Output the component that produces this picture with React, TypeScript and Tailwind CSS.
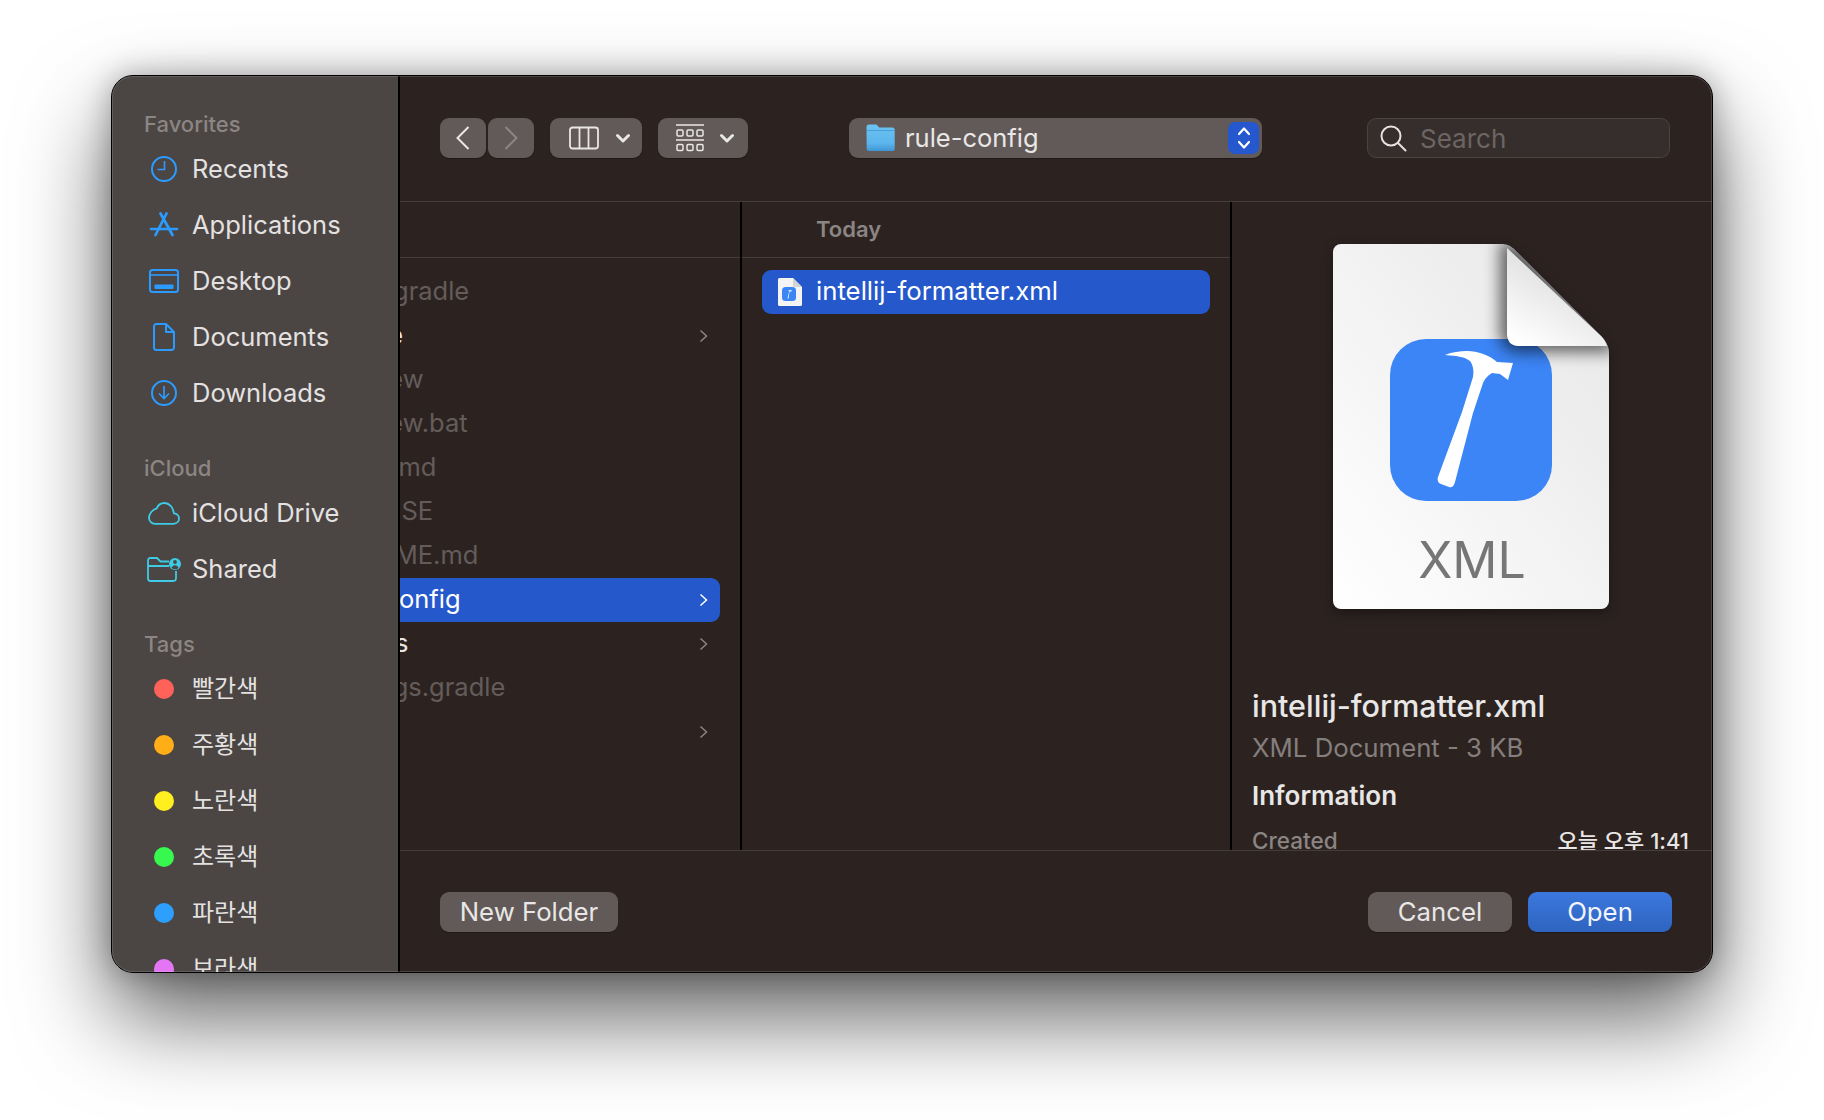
import React from 'react';

const SectionLabel = ({ children, className = '' }: { children: React.ReactNode; className?: string }) => (
  <div className={`h-[34px] flex items-center pl-[32px] text-[22px] font-medium text-[#8b8583] ${className}`}>{children}</div>
);

const SidebarRow = ({ icon, label, korean }: { icon: React.ReactNode; label: string; korean?: boolean }) => (
  <div className="h-[56px] shrink-0 flex items-center">
    <div className="w-[80px] shrink-0 flex items-center justify-center pl-[26px] pr-[2px]">{icon}</div>
    <span className={korean ? 'text-[24px] text-[#e4e2e1]' : 'text-[25.5px] text-[#e4e2e1]'}>{label}</span>
  </div>
);

const blue = '#2c9bff';
const cyan = '#3dcbe6';

const RecentsIcon = () => (
  <svg width="28" height="28" viewBox="0 0 28 28" fill="none" stroke={blue} strokeWidth="2">
    <circle cx="14" cy="14" r="12" />
    <path d="M14.5 6v8.5H7.5" strokeWidth="1.6" />
  </svg>
);
const AppsIcon = () => (
  <svg width="30" height="26" viewBox="0 0 30 26" fill="none" stroke={blue} strokeWidth="2.7" strokeLinecap="round">
    <path d="M11.500 1.500L23.500 23M17.500 1.500L6.500 23" />
    <path d="M2 17h26" />
  </svg>
);
const DesktopIcon = () => (
  <svg width="30" height="24" viewBox="0 0 30 24" fill="none">
    <rect x="1" y="1" width="28" height="22" rx="2.5" stroke={blue} strokeWidth="2" />
    <path d="M1 6h28" stroke={blue} strokeWidth="1.6" />
    <rect x="5.5" y="15.5" width="19" height="4.5" rx="1" fill={blue} />
  </svg>
);
const DocumentIcon = () => (
  <svg width="22" height="28" viewBox="0 0 22 28" fill="none" stroke={blue} strokeWidth="2" strokeLinejoin="round">
    <path d="M3.5 1h9.5l8 8v15.5a2.5 2.5 0 0 1-2.5 2.5h-15A2.5 2.5 0 0 1 1 24.500V3.500A2.500 2.500 0 0 1 3.500 1z" />
    <path d="M13 1v8h8" />
  </svg>
);
const DownloadIcon = () => (
  <svg width="28" height="28" viewBox="0 0 28 28" fill="none" stroke={blue} strokeWidth="2" strokeLinecap="round">
    <circle cx="14" cy="14" r="12" />
    <path d="M14 7.500v12M9.500 15l4.500 4.500 4.500-4.500" strokeWidth="1.700" />
  </svg>
);
const CloudIcon = () => (
  <svg width="32" height="23" viewBox="0 0 32 23" fill="none" stroke={cyan} strokeWidth="1.800">
    <path d="M7 21.800h18.500c3.300 0 5.500-2.400 5.500-5.300 0-2.900-2.200-5-5-5.200C25 5.300 21.300 1 16.500 1c-4 0-6.700 2.500-8 5.700C4.700 7.500 1 11.600 1 15.800c0 3.500 2.700 6 6 6z" />
  </svg>
);
const SharedIcon = () => (
  <svg width="34" height="25" viewBox="0 0 34 25" fill="none">
    <path d="M27 24H3.500A2.500 2.500 0 0 1 1 21.500V3.500A2.500 2.500 0 0 1 3.500 1h6.500l3.500 3.500H22M1 9h21M29 14v7.500a2.500 2.500 0 0 1-2 2.400" stroke={cyan} strokeWidth="1.800" />
    <circle cx="28" cy="7" r="6" fill={cyan} />
    <circle cx="28" cy="5" r="1.900" fill="#4b4544" />
    <path d="M24.500 11c.5-2 2-2.800 3.500-2.800s3 .8 3.500 2.800c-1 .8-2.200 1.200-3.500 1.200s-2.500-.4-3.500-1.200z" fill="#4b4544" />
  </svg>
);

const Dot = ({ color }: { color: string }) => <span className={`block w-[20px] h-[20px] rounded-full ${color}`} />;

const Chevron = ({ color = '#8b8583' }: { color?: string }) => (
  <svg width="9" height="14" viewBox="0 0 9 14" fill="none" stroke={color} strokeWidth="1.500">
    <path d="M1.500 1.500L7.500 7l-6 5.500" />
  </svg>
);

const SmallChevronDown = () => (
  <svg width="16" height="11" viewBox="0 0 16 11" fill="none" stroke="#e9e7e6" strokeWidth="3" strokeLinecap="round" strokeLinejoin="round">
    <path d="M2.500 2.500L8 8l5.500-5.500" />
  </svg>
);

const FolderIcon = () => (
  <svg width="29" height="28" viewBox="0 0 29 28">
    <defs>
      <linearGradient id="folderFill" x1="0" y1="0" x2="0" y2="1">
        <stop offset="0" stopColor="#6cc3f2" />
        <stop offset="0.7" stopColor="#5cb5ec" />
        <stop offset="1" stopColor="#3f95d6" />
      </linearGradient>
    </defs>
    <path d="M0.500 3a2.500 2.500 0 0 1 2.500-2.500h6.500c1 0 1.500.5 2.200 1.300l1.500 1.700h13a2.500 2.500 0 0 1 2.500 2.500v19a2 2 0 0 1-2 2h-24a2 2 0 0 1-2-2z" fill="url(#folderFill)" />
    <path d="M0.500 6.500h28" stroke="#3f95d6" strokeWidth="0.800" />
  </svg>
);

// Big document preview, coordinates measured off the picture
const XmlDocIcon = () => (
  <svg width="276" height="365" viewBox="33 24 276 365" className="overflow-visible drop-shadow-[0_4px_6px_rgba(0,0,0,0.4)]">
    <defs>
      <linearGradient id="pageFill" x1="1" y1="0" x2="0" y2="1">
        <stop offset="0" stopColor="#e6e6e6" />
        <stop offset="1" stopColor="#ffffff" />
      </linearGradient>
      <linearGradient id="foldFill" x1="0.800" y1="0" x2="0.200" y2="1">
        <stop offset="0" stopColor="#d2d2d2" />
        <stop offset="1" stopColor="#ffffff" />
      </linearGradient>
      <filter id="foldBlur" x="-40%" y="-40%" width="180%" height="180%">
        <feGaussianBlur stdDeviation="8" />
      </filter>
      <clipPath id="pageClip">
        <path d="M41 24h160c6 0 10 2 14 6l86 86c5 5 8 11 8 17v248a8 8 0 0 1-8 8H41a8 8 0 0 1-8-8V32a8 8 0 0 1 8-8z" />
      </clipPath>
    </defs>
    <path d="M41 24h160c6 0 10 2 14 6l86 86c5 5 8 11 8 17v248a8 8 0 0 1-8 8H41a8 8 0 0 1-8-8V32a8 8 0 0 1 8-8z" fill="url(#pageFill)" />
    <rect x="90" y="119" width="162" height="162" rx="36" fill="#3c85f6" />
    <path
      d="M145 135C152 132 160 131 167 131C178 131 189 135 197 142L213 143L208 160L200 154L192 153C187 156 185 159 183 163L173 193L155 262C154 266 152 268 149 267L141 264C138 263 137 260 138 257L162 192L173 157C174 150 173 145 170 141C165 137 158 136 145 135Z"
      fill="#ffffff"
    />
    <g clipPath="url(#pageClip)">
      <path d="M200 20l20 4 95 100v8H218c-8 0-18-6-18-18z" fill="#000000" opacity="0.6" filter="url(#foldBlur)" />
    </g>
    <path d="M207 28l94 88c3 3 5 6 6 10H218c-7 0-11-5-11-12z" fill="url(#foldFill)" />
    <text x="172" y="358" textAnchor="middle" fontSize="50" fontWeight="400" fill="#767676">XML</text>
  </svg>
);

const MiniDocIcon = () => (
  <svg width="24" height="28" viewBox="0 0 24 28" className="shrink-0">
    <path d="M1.500 0H15l9 9v17.500a1.500 1.500 0 0 1-1.500 1.500h-21A1.500 1.500 0 0 1 0 26.500v-25A1.500 1.500 0 0 1 1.500 0z" fill="#f4f4f4" />
    <path d="M15 0l9 9h-7.500A1.500 1.500 0 0 1 15 7.500z" fill="#d4d4d4" />
    <rect x="4" y="9" width="14" height="14" rx="3.500" fill="#3c85f6" />
    <path d="M9.500 20.500l1.800-7.500-1.500-.8h4.200l-.8 1.300-1.700.2-1 6.800z" fill="#ffffff" />
  </svg>
);

const columnRows = [
  { name: 'build.gradle' },
  { name: 'gradle', folder: true },
  { name: 'gradlew' },
  { name: 'gradlew.bat' },
  { name: 'HELP.md' },
  { name: 'LICENSE' },
  { name: 'README.md' },
  { name: 'rule-config', folder: true, selected: true },
  { name: 'scripts', folder: true },
  { name: 'settings.gradle' },
  { name: 'src', folder: true },
];

const ToolButton = ({ className = '', children }: { className?: string; children: React.ReactNode }) => (
  <div className={`h-[40px] rounded-[9px] bg-[#625a58] flex items-center shadow-[0_1px_1px_rgba(0,0,0,0.3)] ${className}`}>{children}</div>
);

const FooterButton = ({ className = '', children }: { className?: string; children: React.ReactNode }) => (
  <button className={`h-[40px] rounded-[9px] flex items-center justify-center text-[25.75px] shadow-[0_1px_1px_rgba(0,0,0,0.3)] ${className}`}>{children}</button>
);

export default function App() {
  return (
    <div className="w-full h-[1120px] bg-white pl-[111px] pt-[75px] overflow-hidden font-[Inter,'Noto_Sans_CJK_KR',sans-serif]">
      <div className="relative w-[1602px] h-[898px] rounded-[22px] shadow-[0_44px_90px_rgba(0,0,0,0.62),0_0_30px_rgba(0,0,0,0.3)]">
        <div className="w-full h-full rounded-[22px] overflow-hidden flex bg-[#2c2321] border border-black">
          {/* Sidebar */}
          <div className="w-[286px] shrink-0 h-full bg-[#4b4544] pt-[31px] overflow-hidden">
            <SectionLabel>Favorites</SectionLabel>
            <SidebarRow icon={<RecentsIcon />} label="Recents" />
            <SidebarRow icon={<AppsIcon />} label="Applications" />
            <SidebarRow icon={<DesktopIcon />} label="Desktop" />
            <SidebarRow icon={<DocumentIcon />} label="Documents" />
            <SidebarRow icon={<DownloadIcon />} label="Downloads" />
            <SectionLabel className="mt-[30px]">iCloud</SectionLabel>
            <SidebarRow icon={<CloudIcon />} label="iCloud Drive" />
            <SidebarRow icon={<SharedIcon />} label="Shared" />
            <SectionLabel className="mt-[30px]">Tags</SectionLabel>
            <SidebarRow korean icon={<Dot color="bg-[#ff6259]" />} label="빨간색" />
            <SidebarRow korean icon={<Dot color="bg-[#ffae18]" />} label="주황색" />
            <SidebarRow korean icon={<Dot color="bg-[#ffee20]" />} label="노란색" />
            <SidebarRow korean icon={<Dot color="bg-[#37f84f]" />} label="초록색" />
            <SidebarRow korean icon={<Dot color="bg-[#2d9fff]" />} label="파란색" />
            <SidebarRow korean icon={<Dot color="bg-[#e476f5]" />} label="보라색" />
          </div>

          {/* Main */}
          <div className="flex-1 min-w-0 flex flex-col border-l-2 border-black">
            {/* Toolbar */}
            <div className="h-[126px] shrink-0 flex items-center pl-[40px] pb-[1px] border-b border-[#453d3b]">
              <ToolButton className="w-[46px] justify-center">
                <svg width="14" height="24" viewBox="0 0 14 24" fill="none" stroke="#e9e7e6" strokeWidth="2"><path d="M12.500 1L1.500 12l11 11" /></svg>
              </ToolButton>
              <ToolButton className="w-[46px] justify-center ml-[2px]">
                <svg width="14" height="24" viewBox="0 0 14 24" fill="none" stroke="#8b8583" strokeWidth="2"><path d="M1.500 1l11 11-11 11" /></svg>
              </ToolButton>
              <ToolButton className="w-[92px] ml-[16px] pl-[19px] gap-[16px]">
                <svg width="30" height="24" viewBox="0 0 30 24" fill="none" stroke="#e9e7e6" strokeWidth="1.800">
                  <rect x="1" y="1.500" width="28" height="21" rx="2.500" />
                  <path d="M10.500 1.500v21M19.500 1.500v21" />
                </svg>
                <SmallChevronDown />
              </ToolButton>
              <ToolButton className="w-[90px] ml-[16px] pl-[18px] gap-[15px]">
                <svg width="28" height="28" viewBox="0 0 28 28" fill="none" stroke="#e9e7e6" strokeWidth="1.500">
                  <path d="M0 1h28M0 16h28" />
                  <rect x="1" y="6" width="6" height="6" rx="1.200" />
                  <rect x="11" y="6" width="6" height="6" rx="1.200" />
                  <rect x="21" y="6" width="6" height="6" rx="1.200" />
                  <rect x="1" y="20.500" width="6" height="6" rx="1.200" />
                  <rect x="11" y="20.500" width="6" height="6" rx="1.200" />
                  <rect x="21" y="20.500" width="6" height="6" rx="1.200" />
                </svg>
                <SmallChevronDown />
              </ToolButton>
              <ToolButton className="w-[413px] ml-[101px] pl-[17px] pr-[3px]">
                <FolderIcon />
                <span className="ml-[10px] text-[25.5px] text-[#e9e7e6]">rule-config</span>
                <div className="ml-auto w-[31px] h-[32px] rounded-[7px] bg-[#2558cf] flex items-center justify-center">
                  <svg width="16" height="26" viewBox="0 0 16 26" fill="none" stroke="#ffffff" strokeWidth="2.200" strokeLinecap="round" strokeLinejoin="round">
                    <path d="M3 9l5-5.500L13 9M3 17l5 5.500L13 17" />
                  </svg>
                </div>
              </ToolButton>
              <div className="w-[303px] h-[40px] ml-[105px] rounded-[9px] bg-[#362e2c] border border-[#4a4341] flex items-center pl-[12px]">
                <svg width="27" height="27" viewBox="0 0 27 27" fill="none" stroke="#e4e2e1" strokeWidth="2" strokeLinecap="round">
                  <circle cx="11" cy="11" r="9.500" />
                  <path d="M18 18l7.500 7.500" />
                </svg>
                <span className="ml-[13px] text-[26px] text-[#6c6563]">Search</span>
              </div>
            </div>

            {/* Browser columns */}
            <div className="flex-1 min-h-0 flex">
              <div className="w-[342px] shrink-0 border-r-2 border-black overflow-hidden">
                <div className="h-[56px] border-b border-[#453d3b]" />
                <div className="pt-[12px] pr-[20px]">
                  {columnRows.map((row) => (
                    <div
                      key={row.name}
                      className={`h-[44px] flex items-center justify-between pr-[12px] rounded-r-[9px] ${row.selected ? 'bg-[#2558cb]' : ''}`}
                    >
                      <span className={`-ml-[73px] -mt-[2px] text-[25.5px] whitespace-nowrap ${row.selected ? 'text-white' : row.folder ? 'text-[#e9e7e6]' : 'text-[#645c5a]'}`}>{row.name}</span>
                      {row.folder && <Chevron color={row.selected ? '#ffffff' : '#8b8583'} />}
                    </div>
                  ))}
                </div>
              </div>

              <div className="w-[490px] shrink-0 border-r-2 border-black">
                <div className="h-[56px] flex items-center pl-[74px] border-b border-[#453d3b] text-[22px] font-semibold text-[#8b8583]">Today</div>
                <div className="pt-[12px] px-[20px]">
                  <div className="h-[44px] rounded-[9px] bg-[#2558cb] flex items-center pl-[16px]">
                    <MiniDocIcon />
                    <span className="ml-[14px] -mt-[2px] text-[25.75px] text-white">intellij-formatter.xml</span>
                  </div>
                </div>
              </div>

              {/* Preview */}
              <div className="flex-1 min-w-0 flex flex-col overflow-hidden pl-[20px] pr-[23px]">
                <div className="pt-[42px] flex justify-center pl-[1px]">
                  <XmlDocIcon />
                </div>
                <div className="mt-[77px] text-[30.5px] leading-[40px] font-medium text-[#e9e7e6]">intellij-formatter.xml</div>
                <div className="mt-[2px] text-[25.75px] leading-[40px] text-[#847e7c]">XML Document - 3 KB</div>
                <div className="mt-[8px] text-[26px] leading-[40px] font-semibold text-[#e9e7e6]">Information</div>
                <div className="mt-[5px] flex items-center justify-between h-[40px] shrink-0 text-[22.5px]">
                  <span className="font-medium text-[#8b8583]">Created</span>
                  <span className="font-medium text-[22px] text-[#e9e7e6]">오늘 오후 1:41</span>
                </div>
              </div>
            </div>

            {/* Footer */}
            <div className="h-[122px] shrink-0 flex items-center pl-[40px] pr-[40px] pt-[1px] border-t border-[#453d3b]">
              <FooterButton className="w-[178px] bg-[#625a58] text-[#e9e7e6]">New Folder</FooterButton>
              <FooterButton className="w-[144px] ml-auto bg-[#625a58] text-[#e9e7e6]">Cancel</FooterButton>
              <FooterButton className="w-[144px] ml-[16px] bg-gradient-to-b from-[#3b78de] to-[#2f64bf] text-[#f2f5fc]">Open</FooterButton>
            </div>
          </div>
        </div>
        <div className="pointer-events-none absolute inset-[1px] rounded-[21px] shadow-[inset_0_0_0_1px_rgba(255,255,255,0.14)]" />
      </div>
    </div>
  );
}
